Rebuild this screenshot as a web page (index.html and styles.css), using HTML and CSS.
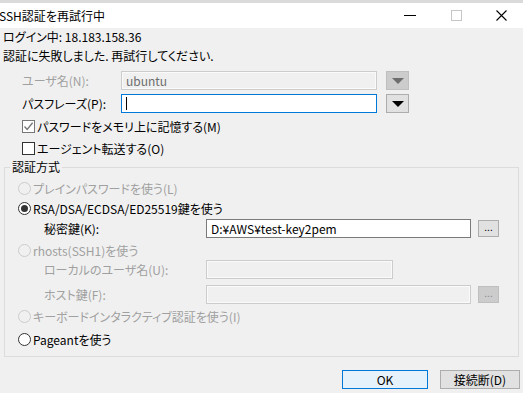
FILE: index.html
```html
<!DOCTYPE html>
<html lang="ja">
<head>
  <meta charset="UTF-8">
  <title>SSH認証を再試行中</title>
  <link rel="stylesheet" href="styles.css">
</head>
<body>
  <div class="strip"></div>
  <!-- タイトルバー -->
  <div class="titlebar">
    <span class="title">SSH認証を再試行中</span>
    <div class="controls">
      <span class="ctl min"></span>
      <span class="ctl max"></span>
      <span class="ctl close">
        <svg width="11" height="11" viewBox="0 0 11 11"><path d="M0.5 0.5 L10.5 10.5 M10.5 0.5 L0.5 10.5" stroke="#000" stroke-width="1.1"/></svg>
      </span>
    </div>
  </div>

  <div class="dialog">
    <div class="line login">ログイン中: 18.183.158.36</div>
    <div class="line msg">認証に失敗しました. 再試行してください.</div>

    <div class="row first">
      <span class="label disabled">ユーザ名(N):</span>
      <div class="input off">ubuntu</div>
      <span class="drop off"><i></i></span>
    </div>
    <div class="row">
      <span class="label">パスフレーズ(P):</span>
      <div class="input focus"><span class="caret"></span></div>
      <span class="drop"><i></i></span>
    </div>

    <div class="check gap1"><span class="box checked"><svg width="11" height="11" viewBox="0 0 11 11"><path d="M1.5 5.5 L4.2 8.4 L9.6 1.8" fill="none" stroke="#777" stroke-width="1.4"/></svg></span>パスワードをメモリ上に記憶する(M)</div>
    <div class="check gap2"><span class="box"></span>エージェント転送する(O)</div>

    <!-- 認証方式 -->
    <fieldset class="group">
      <legend>認証方式</legend>
      <div class="radio r1 disabled"><span class="dot"></span>プレインパスワードを使う(L)</div>
      <div class="radio r2"><span class="dot on"></span>RSA/DSA/ECDSA/ED25519鍵を使う</div>
      <div class="row sub k1">
        <span class="label">秘密鍵(K):</span>
        <div class="input key">D:¥AWS¥test-key2pem</div>
        <span class="more">...</span>
      </div>
      <div class="radio r3 disabled"><span class="dot"></span>rhosts(SSH1)を使う</div>
      <div class="row sub k2">
        <span class="label disabled">ローカルのユーザ名(U):</span>
        <div class="input off short"></div>
      </div>
      <div class="row sub k3">
        <span class="label disabled">ホスト鍵(F):</span>
        <div class="input off key"></div>
        <span class="more off">...</span>
      </div>
      <div class="radio r4 disabled"><span class="dot"></span>キーボードインタラクティブ認証を使う(I)</div>
      <div class="radio r5"><span class="dot"></span>Pageantを使う</div>
    </fieldset>

    <div class="buttons">
      <button class="btn ok">OK</button>
      <button class="btn">接続断(D)</button>
    </div>
  </div>
</body>
</html>
```

FILE: styles.css
```css
/* ベース */
body { margin: 0; width: 523px; height: 393px; overflow: hidden; background: #f0f0f0; font-family: "Noto Sans CJK JP", "Liberation Sans", sans-serif; font-size: 12px; color: #000; font-feature-settings: "palt"; }
.strip { height: 3px; background: #dadada; }

/* タイトルバー */
.titlebar { height: 25px; background: #fff; display: flex; align-items: center; justify-content: space-between; }
.title { margin-left: -1px; font-size: 12px; }
.controls { display: flex; height: 100%; }
.ctl { width: 46px; display: flex; align-items: center; justify-content: center; }
.min::before { content: ""; width: 12px; height: 1px; background: #000; }
.max::before { content: ""; width: 9px; height: 9px; border: 1px solid #c6c6c6; }
.close { width: 44px; }

/* 本体 */
.dialog { padding: 0 4px 0 4px; }
.line { height: 18px; line-height: 18px; margin-left: -1px; }
.login { margin-top: 0; }
.msg { margin-top: 1px; }

.row { display: flex; align-items: center; height: 19px; margin-top: 4px; }
.row.first { margin-top: 6px; }
.label { width: 99px; padding-left: 18px; }
.disabled { color: #a0a0a0; }
.input { box-sizing: border-box; width: 256px; height: 19px; border: 1px solid #7a7a7a; background: #fff; padding: 0 4px; line-height: 16px; display: flex; align-items: center; }
.input.off { border-color: #cccccc; background: #f0f0f0; box-shadow: inset 0 0 0 1px #fafafa; color: #6d6d6d; }
.input.focus { border-color: #0078d7; }
.caret { width: 1px; height: 13px; background: #000; }
.drop { box-sizing: border-box; width: 23px; height: 19px; margin-left: 9px; border: 1px solid #adadad; background: #e1e1e1; display: flex; align-items: center; justify-content: center; }
.drop i { width: 0; height: 0; border-left: 6px solid transparent; border-right: 6px solid transparent; border-top: 6px solid #000; margin-top: 1px; }
.drop.off { background: #cccccc; border-color: #bfbfbf; }
.drop.off i { border-top-color: #6d6d6d; }

/* チェックボックス */
.check { display: flex; align-items: center; height: 15px; padding-left: 18px; }
.gap1 { margin-top: 6px; }
.gap2 { margin-top: 7px; }
.box { box-sizing: border-box; width: 13px; height: 13px; border: 1px solid #333; background: #fff; margin-right: 2px; display: flex; align-items: center; justify-content: center; }
.box.checked { border-color: #777; }

/* グループ */
.group { margin: 4px 0 0 0; padding: 0 0 11px 0; border: 1px solid #dcdcdc; height: 184px; }
.group legend { padding: 0 2px; margin-left: 5px; line-height: 14px; }
.radio { display: flex; align-items: center; height: 15px; padding-left: 13px; }
.r1 { margin-top: 7px; }
.r2 { margin-top: 5px; }
.r3 { margin-top: 5px; }
.r4 { margin-top: 5px; }
.r5 { margin-top: 8px; }
.dot { box-sizing: border-box; width: 13px; height: 13px; border-radius: 50%; border: 1px solid #333; background: #fff; margin-right: 2px; display: flex; align-items: center; justify-content: center; }
.radio.disabled .dot { border-color: #cccccc; background: #f0f0f0; }
.dot.on::before { content: ""; width: 7px; height: 7px; border-radius: 50%; background: #333; }
.sub .label { padding-left: 39px; width: 162px; }
.k1 { margin-top: 3px; }
.k2 { margin-top: 2px; }
.k3 { margin-top: 6px; }
.input.key { width: 265px; }
.input.short { width: 187px; }
.more { box-sizing: border-box; width: 21px; height: 17px; margin-left: 7px; border: 1px solid #adadad; background: #e1e1e1; font-size: 10px; line-height: 12px; text-align: center; }
.more.off { background: #cccccc; border-color: #bfbfbf; color: #8a8a8a; }

/* ボタン */
.buttons { display: flex; justify-content: flex-end; gap: 12px; margin-top: 13px; margin-right: -1px; }
.btn { box-sizing: border-box; width: 80px; height: 19px; border: 1px solid #adadad; background: #e1e1e1; font-family: inherit; font-size: 12px; padding: 0; line-height: 16px; }
.btn.ok { width: 86px; border-color: #0078d7; background: #e5f1fb; }
```
